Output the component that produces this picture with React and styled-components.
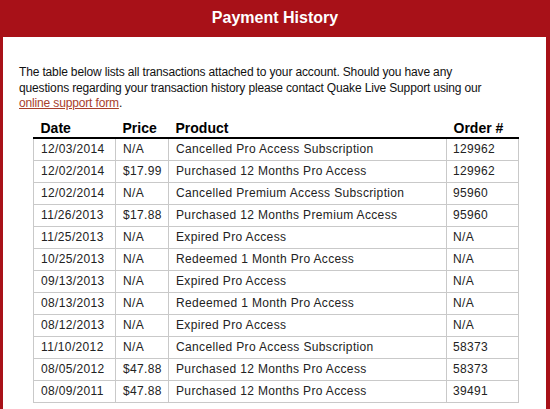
import React from 'react';
import styled, { createGlobalStyle } from 'styled-components';

const GlobalStyle = createGlobalStyle`
  html, body {
    margin: 0;
    padding: 0;
    background: #fff;
  }
  body {
    font-family: "Liberation Sans", Arial, sans-serif;
  }
`;

const Panel = styled.div`
  width: 550px;
  height: 409px;
  box-sizing: border-box;
  border-left: 3px solid #a81118;
  border-right: 4px solid #a81118;
  background: #fff;
  overflow: hidden;
`;

const Header = styled.div`
  height: 37px;
  margin: 0 -4px 0 -3px;
  background: #a81118;
  color: #fff;
  font-size: 16px;
  font-weight: bold;
  display: flex;
  align-items: center;
  justify-content: center;
  padding-bottom: 1px;
  box-sizing: border-box;
`;

const Body = styled.div`
  padding: 28px 16px 0 16px;
`;

const Intro = styled.p`
  margin: 0;
  font-size: 12px;
  line-height: 15.5px;
  letter-spacing: -0.15px;
  color: #111;
  white-space: nowrap;
`;

const SupportLink = styled.a`
  color: #a8402c;
  text-decoration: underline;
`;

const Table = styled.table`
  margin: 8px 0 0 14px;
  width: 485px;
  border-collapse: collapse;
  table-layout: fixed;
`;

const Th = styled.th`
  height: 17px;
  padding: 0 7px;
  text-align: left;
  vertical-align: bottom;
  font-size: 14px;
  line-height: 17px;
  font-weight: bold;
  color: #000;
  border-bottom: 2px solid #000;
`;

const Td = styled.td`
  height: 21px;
  padding: 0 ${p => (p.$last ? 6 : 7)}px;
  font-size: 12px;
  line-height: 21px;
  letter-spacing: 0.35px;
  color: #222;
  border: 1px solid #c9c9c9;
  white-space: nowrap;
`;

const rows = [
  ['12/03/2014', 'N/A', 'Cancelled Pro Access Subscription', '129962'],
  ['12/02/2014', '$17.99', 'Purchased 12 Months Pro Access', '129962'],
  ['12/02/2014', 'N/A', 'Cancelled Premium Access Subscription', '95960'],
  ['11/26/2013', '$17.88', 'Purchased 12 Months Premium Access', '95960'],
  ['11/25/2013', 'N/A', 'Expired Pro Access', 'N/A'],
  ['10/25/2013', 'N/A', 'Redeemed 1 Month Pro Access', 'N/A'],
  ['09/13/2013', 'N/A', 'Expired Pro Access', 'N/A'],
  ['08/13/2013', 'N/A', 'Redeemed 1 Month Pro Access', 'N/A'],
  ['08/12/2013', 'N/A', 'Expired Pro Access', 'N/A'],
  ['11/10/2012', 'N/A', 'Cancelled Pro Access Subscription', '58373'],
  ['08/05/2012', '$47.88', 'Purchased 12 Months Pro Access', '58373'],
  ['08/09/2011', '$47.88', 'Purchased 12 Months Pro Access', '39491'],
];

export default function App() {
  return (
    <>
      <GlobalStyle />
      <Panel>
        <Header>Payment History</Header>
        <Body>
          <Intro>
            The table below lists all transactions attached to your account. Should you have any
            <br />
            questions regarding your transaction history please contact Quake Live Support using our
            <br />
            <SupportLink href="#">online support form</SupportLink>.
          </Intro>
          <Table>
            <colgroup>
              <col style={{ width: 82 }} />
              <col style={{ width: 53 }} />
              <col style={{ width: 278 }} />
              <col style={{ width: 72 }} />
            </colgroup>
            <thead>
              <tr>
                <Th>Date</Th>
                <Th>Price</Th>
                <Th>Product</Th>
                <Th>Order #</Th>
              </tr>
            </thead>
            <tbody>
              {rows.map((r, i) => (
                <tr key={i}>
                  <Td>{r[0]}</Td>
                  <Td>{r[1]}</Td>
                  <Td>{r[2]}</Td>
                  <Td $last>{r[3]}</Td>
                </tr>
              ))}
            </tbody>
          </Table>
        </Body>
      </Panel>
    </>
  );
}
